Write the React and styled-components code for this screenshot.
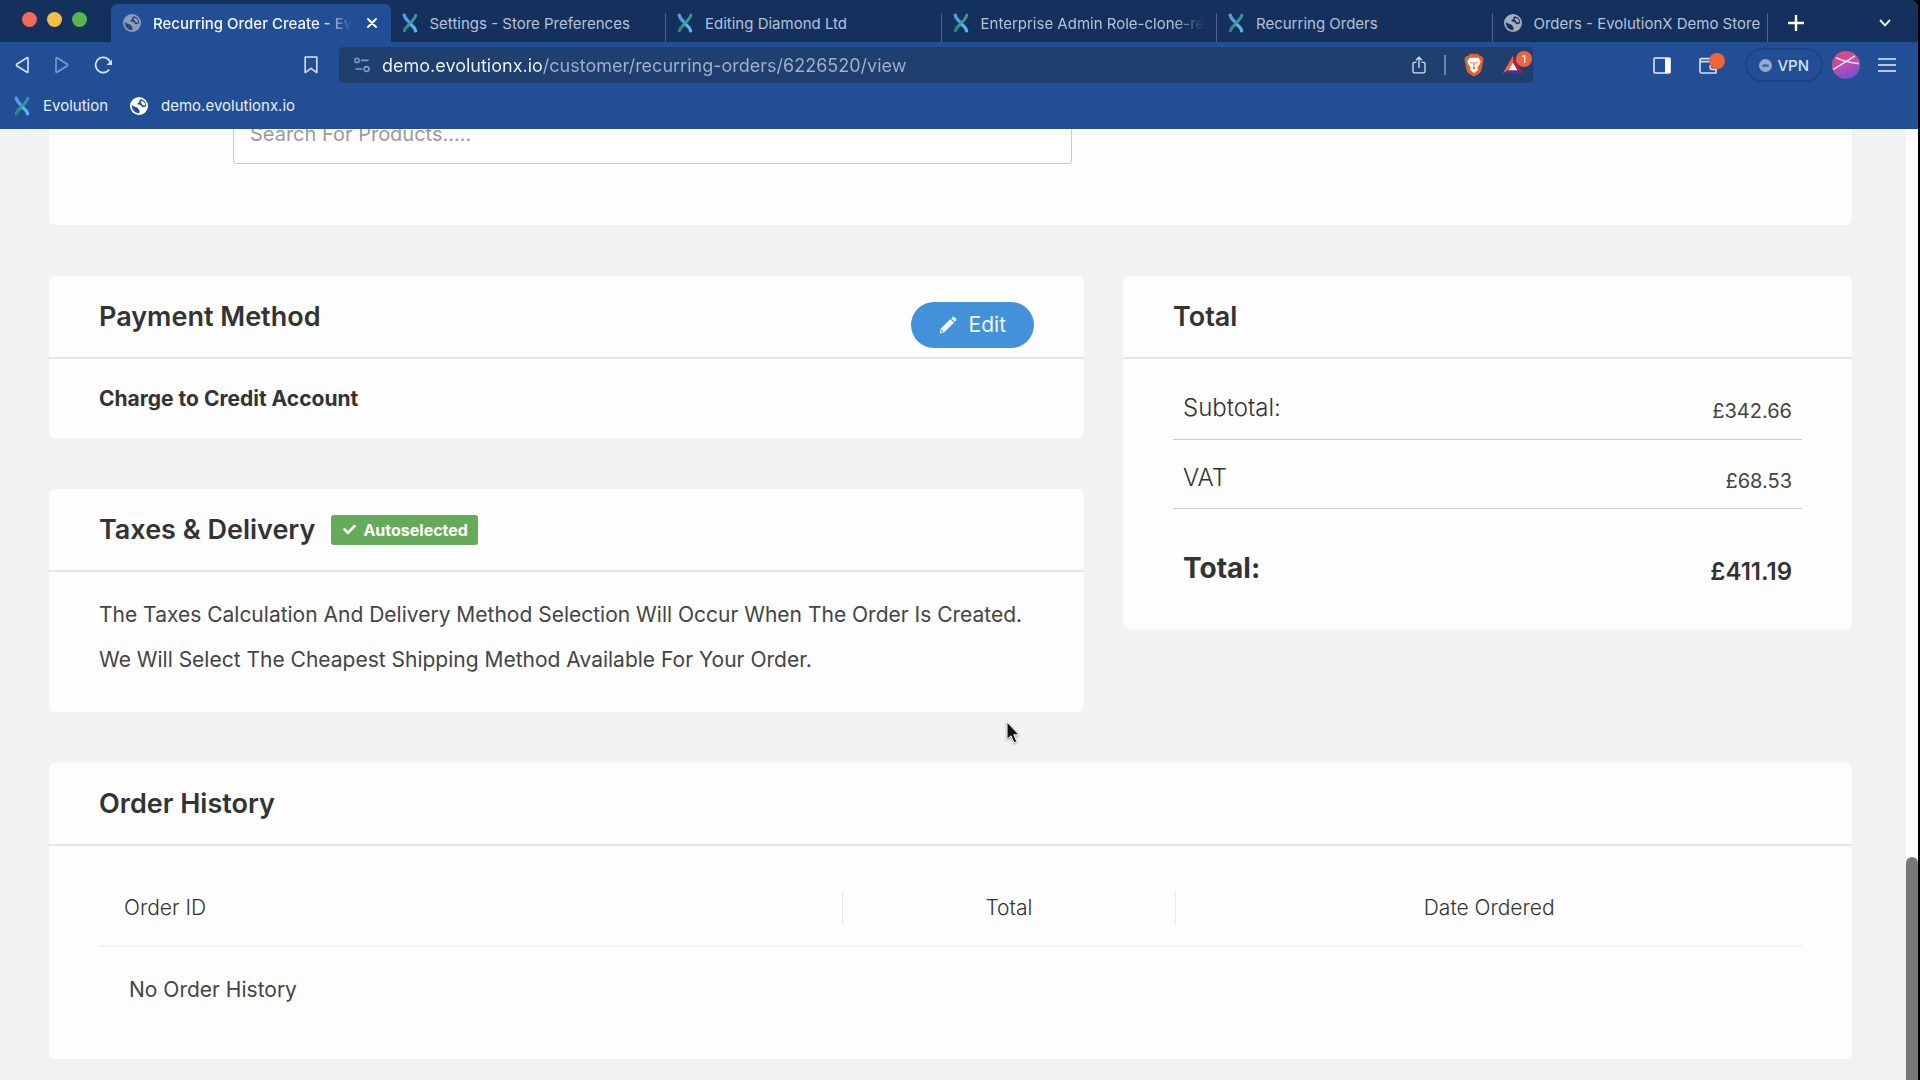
import { useState } from 'react';
import styled, { createGlobalStyle } from 'styled-components';
import { FaCheck } from 'react-icons/fa';

const tabs = [
    { title: "Recurring Order Create - Ev", icon: "globe", fade: true },
    { title: "Settings - Store Preferences", icon: "logo" },
    { title: "Editing Diamond Ltd", icon: "logo" },
    { title: "Enterprise Admin Role-clone-re", icon: "logo", fade: true },
    { title: "Recurring Orders", icon: "logo" },
    { title: "Orders - EvolutionX Demo Store", icon: "globe" },
];

const LogoIcon = () => (
    <svg width="16" height="20" viewBox="0 0 16 20" fill="none" strokeLinecap="round" aria-hidden="true">
        <path d="M2.2 2.2C3 6 6 7.6 7 9.2" stroke="#4f9fe6" strokeWidth="3.4" />
        <path d="M13.8 2.2C13 6 10.2 7.4 9 9.4C7.6 12 3.4 13.6 2.4 17.6" stroke="#3f948f" strokeWidth="3" />
        <path d="M5 13.6C3.6 15 2.8 16.2 2.4 17.6" stroke="#2b6474" strokeWidth="1" />
        <path d="M9.4 12C11.6 13.6 13 15.4 13.6 17.8" stroke="#55b6ee" strokeWidth="3.4" />
    </svg>
);

const GlobeIcon = ({ color, land }) => (
    <svg width="18" height="18" viewBox="0 0 18 18" aria-hidden="true">
        <circle cx="9" cy="9" r="9" fill={color} />
        <path
            d="M11 2.2C9.4 2.6 9 3.6 9.6 4.6C9.9 5.6 7.6 5.4 7.4 6.8C7.3 8 9.4 7.6 10.6 8.2C12 8.9 11.6 10 13 10.2C14.4 10.3 15.4 9.4 16.2 9.3C16.3 6 14.4 3 11 2.2Z"
            fill={land}
        />
        <path d="M1.8 8C3.2 9.4 5 9.6 7 10.4C8.6 11 8.2 12.2 9.2 12.9C10.2 13.6 9 15 9.4 16.2C5 16.4 1.6 12.8 1.8 8Z" fill={land} />
        <path d="M11.6 3.8C14 4.6 15.2 6.4 15.2 8.2C14 8.8 12.8 8.6 12.2 7.4C11.8 6.4 10.8 6.4 10.6 5.6Z" fill={color} />
    </svg>
);

const BackIcon = ({ flip }) => (
    <svg width="16" height="18" viewBox="0 0 16 18" fill="none" stroke="currentColor" strokeWidth="1.6" strokeLinejoin="round" aria-hidden="true">
        <path d={flip ? "M2 3V15.4Q2 17 3.4 16L13 10Q14.3 9 13 8L3.4 2Q2 1 2 3Z" : "M14 3V15.4Q14 17 12.6 16L3 10Q1.7 9 3 8L12.6 2Q14 1 14 3Z"} />
    </svg>
);

const ReloadIcon = () => (
    <svg width="20" height="18" viewBox="0 0 20 18" fill="none" aria-hidden="true">
        <path d="M15.2 13.6A7.6 7.6 0 1 1 16.2 6" stroke="currentColor" strokeWidth="1.8" />
        <path d="M18 3.6V9H12.6Z" fill="currentColor" />
    </svg>
);

const BookmarkIcon = () => (
    <svg width="14" height="18" viewBox="0 0 14 18" fill="none" stroke="currentColor" strokeWidth="1.6" aria-hidden="true">
        <path d="M1.2 1H12.8V16.6L7 12.4L1.2 16.6Z" strokeLinejoin="round" />
    </svg>
);

const TuneIcon = () => (
    <svg width="16" height="16" viewBox="0 0 16 16" fill="none" stroke="currentColor" strokeWidth="1.6" strokeLinecap="round" aria-hidden="true">
        <circle cx="3" cy="3.4" r="2.1" />
        <path d="M7.6 3.4H14M2 12H8" />
        <circle cx="12.6" cy="12" r="2.4" />
    </svg>
);

const ShareIcon = () => (
    <svg width="14" height="18" viewBox="0 0 14 18" fill="none" stroke="currentColor" strokeWidth="1.3" aria-hidden="true">
        <path d="M4.4 6.4H2.2Q1 6.4 1 7.6V15.4Q1 16.8 2.4 16.8H11.6Q13 16.8 13 15.4V7.6Q13 6.4 11.8 6.4H9.6" />
        <path d="M7 12V1.6M4 4.2L7 1.2L10 4.2" />
    </svg>
);

const BraveIcon = () => (
    <svg width="20" height="24" viewBox="0 0 20 24" aria-hidden="true">
        <path d="M6 .8H14L16 3L18 3.2L19.6 6.4L19 9L17.4 17.2Q16.8 19.4 14.8 20.8L10 23.6L5.2 20.8Q3.2 19.4 2.6 17.2L1 9L.4 6.4L2 3.2L4 3Z" fill="#e8602c" />
        <path d="M6 4.6L8 5L10 4.4L12 5L14 4.6L16.6 8L15.8 11L13.4 14.8L14 17L10 20L6 17L6.6 14.8L4.2 11L3.4 8Z" fill="#fff" />
        <path d="M5.8 8.6L8.6 9.4L8.4 11ZM14.2 8.6L11.4 9.4L11.6 11ZM8.4 15L10 13.6L11.6 15L10 16.2ZM9.5 9H10.5V13.6H9.5Z" fill="#e8602c" />
    </svg>
);

const RewardsIcon = () => (
    <svg width="22" height="20" viewBox="0 0 24 20" aria-hidden="true">
        <path d="M12 0L12 8L7.4 15.4L1 19Z" fill="#f0643a" />
        <path d="M12 0L23 19L16.6 15.4L12 8Z" fill="#a8244e" />
        <path d="M1 19L7.4 15.4H16.6L23 19Z" fill="#5d2c91" />
        <path d="M12 7.6L16.8 15.6H7.2Z" fill="#fff" />
    </svg>
);

const SidebarIcon = () => (
    <svg width="18" height="17" viewBox="0 0 18 17" aria-hidden="true">
        <rect x="1" y="1" width="16" height="15" rx="1" fill="none" stroke="#e6eefb" strokeWidth="1.5" />
        <rect x="12" y="1" width="5.4" height="15" fill="#fff" />
    </svg>
);

const WalletIcon = () => (
    <svg width="18" height="17" viewBox="0 0 18 17" fill="none" stroke="#d4e2f8" strokeWidth="1.6" aria-hidden="true">
        <path d="M17 5V1.6H2.4Q1 1.6 1 3V14.4Q1 16 2.4 16H17V12.6M1 4.6H17" />
        <path d="M18 7.6H13.4Q11 7.8 11 10Q11 12.4 13.4 12.4H18" />
    </svg>
);

const AvatarIcon = () => (
    <svg width="28" height="28" viewBox="0 0 28 28" aria-hidden="true">
        <defs>
            <linearGradient id="avatar" x1="0.3" y1="0" x2="0.7" y2="1">
                <stop offset="0" stopColor="#dc4a7c" />
                <stop offset="0.5" stopColor="#b94fb0" />
                <stop offset="1" stopColor="#6f4fd6" />
            </linearGradient>
        </defs>
        <circle cx="14" cy="14" r="14" fill="url(#avatar)" />
        <path d="M1 18.6L23 5M4 6.8Q14 11.4 27 12.6" fill="none" stroke="#f2d3ec" strokeWidth="1.6" />
    </svg>
);

const PencilIcon = () => (
    <svg width="18" height="18" viewBox="0 0 18 18" fill="#eef6ff" aria-hidden="true">
        <path d="M11.4 3L15 6.8L5.4 16.2L.6 17.4L1.8 12.4Z" />
        <path d="M12.2 2.2L13.6 .9Q14.4 .2 15.2 1L17 2.8Q17.8 3.6 17 4.4L15.8 6Z" />
        <path d="M2.6 13.4L4.6 15.4L2.2 16Z" fill="#4391d8" />
    </svg>
);

const CursorIcon = () => (
    <svg width="14" height="24" viewBox="0 0 14 24" aria-hidden="true">
        <path d="M1 1V18.4L5 14.8L8 21.8L10.8 20.6L7.8 13.8H13Z" fill="#111" stroke="#fff" strokeWidth="1" />
    </svg>
);

const App = () => {
    const [address, setAddress] = useState("demo.evolutionx.io/customer/recurring-orders/6226520/view");
    const [search, setSearch] = useState("");

    return (
        <>
            <GlobalStyle />
            <Browser>
                <TabStrip>
                    <Lights>
                        <Light color="#ee6a5b" />
                        <Light color="#f3be4e" />
                        <Light color="#58b652" />
                    </Lights>
                    <Tabs>
                        {tabs.map((tab, i) => (
                            <Tab key={tab.title} $active={i === 0}>
                                <TabButton type="button" $active={i === 0}>
                                    {tab.icon === "logo"
                                        ? <LogoIcon />
                                        : <GlobeIcon color={i === 0 ? "#8f9cb3" : "#a3adbd"} land={i === 0 ? "#234a88" : "#17325e"} />}
                                    <TabTitle $fade={tab.fade}>{tab.title}</TabTitle>
                                </TabButton>
                                {i === 0 && (
                                    <TabClose type="button" aria-label="Close tab">
                                        <svg width="10" height="10" viewBox="0 0 10 10" stroke="#fff" strokeWidth="1.8" strokeLinecap="round">
                                            <path d="M1 1L9 9M9 1L1 9" />
                                        </svg>
                                    </TabClose>
                                )}
                            </Tab>
                        ))}
                    </Tabs>
                    <StripActions>
                        <IconButton type="button" aria-label="New tab">
                            <svg width="16" height="16" viewBox="0 0 16 16" stroke="#fff" strokeWidth="2.4">
                                <path d="M8 0V16M0 8H16" />
                            </svg>
                        </IconButton>
                        <IconButton type="button" aria-label="Search tabs">
                            <svg width="12" height="8" viewBox="0 0 12 8" fill="none" stroke="#e6eefb" strokeWidth="2">
                                <path d="M1 1L6 6.4L11 1" />
                            </svg>
                        </IconButton>
                    </StripActions>
                </TabStrip>

                <Toolbar>
                    <NavButtons>
                        <IconButton type="button" aria-label="Back"><BackIcon /></IconButton>
                        <IconButton type="button" aria-label="Forward" $dim><BackIcon flip /></IconButton>
                        <IconButton type="button" aria-label="Reload"><ReloadIcon /></IconButton>
                    </NavButtons>
                    <IconButton type="button" aria-label="Bookmark this page"><BookmarkIcon /></IconButton>
                    <AddressBar>
                        <IconButton type="button" aria-label="Site settings" $dim><TuneIcon /></IconButton>
                        <AddressInput
                            type="text"
                            aria-label="Address"
                            value={address}
                            onChange={(e) => setAddress(e.target.value)}
                        />
                        <AddressActions>
                            <IconButton type="button" aria-label="Share"><ShareIcon /></IconButton>
                            <Divider />
                            <IconButton type="button" aria-label="Shields"><BraveIcon /></IconButton>
                            <IconButton type="button" aria-label="Rewards">
                                <RewardsIcon />
                                <Count>1</Count>
                            </IconButton>
                        </AddressActions>
                    </AddressBar>
                    <BrowserActions>
                        <Tools>
                            <IconButton type="button" aria-label="Sidebar"><SidebarIcon /></IconButton>
                            <IconButton type="button" aria-label="Wallet">
                                <WalletIcon />
                                <Count />
                            </IconButton>
                            <Account>
                                <VpnButton type="button"><VpnDot />VPN</VpnButton>
                                <IconButton type="button" aria-label="Profile"><AvatarIcon /></IconButton>
                            </Account>
                        </Tools>
                        <IconButton type="button" aria-label="Menu">
                            <svg width="18" height="14" viewBox="0 0 18 14" stroke="#b4c6e6" strokeWidth="2">
                                <path d="M0 1H18M0 7H18M0 13H18" />
                            </svg>
                        </IconButton>
                    </BrowserActions>
                </Toolbar>

                <Bookmarks>
                    <Bookmark href="#evolution"><LogoIcon />Evolution</Bookmark>
                    <Bookmark href="#demo"><GlobeIcon color="#fff" land="#214e94" />demo.evolutionx.io</Bookmark>
                </Bookmarks>

                <Viewport>
                    <Page>
                        <Card>
                            <SearchRow>
                                <SearchInput
                                    type="text"
                                    aria-label="Search For Products"
                                    placeholder="Search For Products....."
                                    value={search}
                                    onChange={(e) => setSearch(e.target.value)}
                                />
                            </SearchRow>
                        </Card>

                        <Columns>
                            <Stack>
                                <Card>
                                    <CardHeader>
                                        <Heading>Payment Method</Heading>
                                        <EditButton type="button"><PencilIcon />Edit</EditButton>
                                    </CardHeader>
                                    <PaymentName>Charge to Credit Account</PaymentName>
                                </Card>
                                <Card>
                                    <CardHeader>
                                        <Heading>Taxes &amp; Delivery</Heading>
                                        <Badge><FaCheck size={13} />Autoselected</Badge>
                                    </CardHeader>
                                    <Notes>
                                        <p>The Taxes Calculation And Delivery Method Selection Will Occur When The Order Is Created.</p>
                                        <p>We Will Select The Cheapest Shipping Method Available For Your Order.</p>
                                    </Notes>
                                </Card>
                            </Stack>
                            <Card>
                                <CardHeader>
                                    <Heading>Total</Heading>
                                </CardHeader>
                                <TotalsBody>
                                    <Totals>
                                        <tbody>
                                            <TotalRow><th scope="row">Subtotal:</th><td>£342.66</td></TotalRow>
                                            <TotalRow><th scope="row">VAT</th><td>£68.53</td></TotalRow>
                                            <GrandRow><th scope="row">Total:</th><td>£411.19</td></GrandRow>
                                        </tbody>
                                    </Totals>
                                </TotalsBody>
                            </Card>
                        </Columns>

                        <Card>
                            <CardHeader>
                                <Heading>Order History</Heading>
                            </CardHeader>
                            <HistoryBody>
                                <History>
                                    <colgroup>
                                        <col width="43.6%" />
                                        <col width="19.6%" />
                                        <col />
                                    </colgroup>
                                    <thead>
                                        <tr>
                                            <HistoryHead $first><span>Order ID</span></HistoryHead>
                                            <HistoryHead><span>Total</span></HistoryHead>
                                            <HistoryHead><span>Date Ordered</span></HistoryHead>
                                        </tr>
                                    </thead>
                                    <tbody>
                                        <tr>
                                            <HistoryCell colSpan={3}>No Order History</HistoryCell>
                                        </tr>
                                    </tbody>
                                </History>
                            </HistoryBody>
                        </Card>
                    </Page>
                    <ScrollTrack>
                        <ScrollThumb />
                    </ScrollTrack>
                </Viewport>
            </Browser>
            <Pointer><CursorIcon /></Pointer>
        </>
    );
};

const GlobalStyle = createGlobalStyle`
  * { box-sizing: border-box; }
  body {
    margin: 0;
    background: #000;
    font-family: Inter, "Open Sans", sans-serif;
  }
  button, input { font-family: inherit; }
  svg { display: block; flex: none; }
`;

const Browser = styled.div`
  display: flex;
  flex-direction: column;
  height: 100vh;
  margin-right: 2px;
  overflow: hidden;
  border-top-right-radius: 8px;
  background: #214e94;
`;

const TabStrip = styled.div`
  display: flex;
  height: 42px;
  flex: none;
  padding-top: 4px;
  background: #14305c;
`;

const Lights = styled.div`
  display: flex;
  gap: 10px;
  width: 111px;
  padding: 8px 0 0 22px;
`;

const Light = styled.span`
  width: 15px;
  height: 15px;
  border-radius: 50%;
  background: ${(props) => props.color};
`;

/* the active tab is slightly wider than the rest */
const Tabs = styled.div`
  display: grid;
  grid-template-columns: minmax(0, 279fr) repeat(5, minmax(0, 275fr));
  flex: 1;
  min-width: 0;
`;

const Tab = styled.div`
  display: flex;
  align-items: center;
  min-width: 0;
  padding: ${(props) => (props.$active ? "0 10px 0 12px" : "0 1px 0 11px")};
  border-radius: ${(props) => (props.$active ? "6px 6px 0 0" : "0")};
  background: ${(props) => (props.$active
        ? "#214e94"
        : "linear-gradient(#4a638c, #4a638c) right bottom / 1px 29px no-repeat")};
`;

const TabButton = styled.button`
  display: flex;
  align-items: center;
  gap: 12px;
  flex: 1;
  min-width: 0;
  height: 30px;
  padding: 0;
  border: none;
  background: none;
  font-size: 15px;
  font-weight: ${(props) => (props.$active ? "500" : "400")};
  color: ${(props) => (props.$active ? "#f0f5fd" : "#b4c2d9")};
`;

const TabTitle = styled.span`
  white-space: nowrap;
  text-align: left;
  mask-image: ${(props) => (props.$fade ? "linear-gradient(90deg, #000 calc(100% - 30px), transparent)" : "none")};
`;

const TabClose = styled.button`
  padding: 4px;
  border: none;
  background: none;
`;

const StripActions = styled.div`
  display: flex;
  align-items: center;
  justify-content: space-between;
  width: 150px;
  padding: 0 27px 0 20px;
`;

const IconButton = styled.button`
  position: relative;
  display: flex;
  padding: 0;
  border: none;
  background: none;
  color: ${(props) => (props.$dim ? "#7f9ac8" : "#d4e2f8")};
`;

const Toolbar = styled.div`
  display: flex;
  align-items: center;
  flex: none;
  height: 46px;
  padding: 0 22px 0 14px;
`;

const NavButtons = styled.div`
  display: flex;
  align-items: center;
  gap: 24px;
  flex: none;
  width: 290px;
`;

const AddressBar = styled.div`
  display: flex;
  align-items: center;
  gap: 12px;
  flex: 1;
  min-width: 0;
  height: 36px;
  margin-left: 21px;
  padding: 0 9px 0 15px;
  border-radius: 4px;
  background: #1f406f;
`;

/* host part of the address is brighter than the path */
const AddressInput = styled.input`
  flex: 1;
  min-width: 0;
  height: 36px;
  padding: 0;
  border: none;
  outline: none;
  font-size: 18px;
  color: transparent;
  background: linear-gradient(90deg, #f2f6fd 160px, #9fb2d0 160px);
  background-clip: text;
`;

const AddressActions = styled.div`
  display: flex;
  align-items: center;
  gap: 18px;
`;

const Divider = styled.span`
  width: 2px;
  height: 20px;
  background: #6e87ae;
`;

const Count = styled.span`
  position: absolute;
  top: -4px;
  right: -8px;
  width: 16px;
  height: 16px;
  border-radius: 50%;
  background: #ef6537;
  color: #fff;
  font-size: 11px;
  line-height: 16px;
  text-align: center;
`;

const BrowserActions = styled.div`
  display: flex;
  align-items: center;
  justify-content: flex-end;
  gap: 18px;
  flex: none;
  width: 363px;
`;

const Tools = styled.div`
  display: flex;
  align-items: center;
  gap: 28px;
`;

const Account = styled.div`
  display: flex;
  align-items: center;
  gap: 9px;
`;

const VpnButton = styled.button`
  display: flex;
  align-items: center;
  gap: 5px;
  height: 34px;
  padding: 0 12px;
  border: 2px solid #1e4480;
  border-radius: 17px;
  background: none;
  color: #d4e2f8;
  font-size: 15px;
  font-weight: 500;
`;

const VpnDot = styled.span`
  width: 13px;
  height: 13px;
  border: solid #93a9d0;
  border-width: 5px 3px;
  border-radius: 50%;
  background: #4b6aa3;
`;

const Bookmarks = styled.div`
  display: flex;
  align-items: center;
  gap: 22px;
  flex: none;
  height: 41px;
  padding: 0 14px 6px;
`;

const Bookmark = styled.a`
  display: flex;
  align-items: center;
  gap: 13px;
  color: #e6eefb;
  font-size: 15px;
  text-decoration: none;
`;

const Viewport = styled.main`
  display: flex;
  align-items: flex-end;
  flex: 1;
  min-height: 0;
  overflow: hidden;
  background: #f2f2f2;
`;

const Page = styled.div`
  display: flex;
  flex-direction: column;
  gap: 51px;
  flex: 1;
  min-width: 0;
  padding: 0 54px 21px 49px;
  color: #333;
`;

const Card = styled.section`
  border-radius: 6px;
  background: #fdfdfd;
`;

const SearchRow = styled.div`
  display: grid;
  grid-template-columns: 839fr 780fr;
  padding: 48px 0 61px 184px;
`;

const SearchInput = styled.input`
  height: 60px;
  padding: 0 16px;
  border: 1px solid #ccc;
  border-radius: 3px;
  background: #fff;
  font-size: 20px;
  color: #333;

  &::placeholder { color: #999; }
`;

const Columns = styled.div`
  display: grid;
  grid-template-columns: minmax(0, 1035fr) minmax(0, 729fr);
  align-items: start;
  gap: 39px;
`;

const Stack = styled.div`
  display: flex;
  flex-direction: column;
  gap: 51px;
`;

const CardHeader = styled.header`
  display: flex;
  align-items: center;
  height: 83px;
  padding: 0 50px;
  border-bottom: 2px solid #e6e6e6;
`;

const Heading = styled.h2`
  margin: 0;
  font-size: 27px;
  font-weight: 600;
  line-height: 40px;
`;

const EditButton = styled.button`
  display: flex;
  align-items: center;
  gap: 12px;
  height: 46px;
  margin: 16px 0 0 auto;
  padding: 0 28px;
  border: none;
  border-radius: 23px;
  background: #4391d8;
  color: #eef6ff;
  font-size: 21px;
`;

const Badge = styled.span`
  display: flex;
  align-items: center;
  gap: 7px;
  height: 30px;
  margin-left: 16px;
  padding: 0 10px 0 12px;
  border-radius: 3px;
  background: #66ab5c;
  color: #fff;
  font-size: 16px;
  font-weight: 700;
`;

const PaymentName = styled.p`
  margin: 0;
  padding: 17px 50px;
  font-size: 21px;
  font-weight: 700;
  line-height: 45px;
`;

const Notes = styled.div`
  padding: 20px 50px 30px;
  font-size: 21px;
  line-height: 45px;
  color: #444;

  p { margin: 0; }
`;

const TotalsBody = styled.div`
  padding: 11px 50px 31px;
`;

const Totals = styled.table`
  width: 100%;
  border-collapse: collapse;

  th, td { padding: 0 10px; vertical-align: top; }
  th { text-align: left; }
  td { text-align: right; }
`;

const TotalRow = styled.tr`
  height: 69px;
  border-bottom: 1px solid #ccc;

  th { padding-top: 18px; font-size: 24px; font-weight: 300; line-height: 40px; }
  td { padding-top: 20px; font-size: 20px; line-height: 42px; color: #444; }
`;

const GrandRow = styled.tr`
  height: 90px;

  th { padding-top: 39px; font-size: 28px; font-weight: 700; line-height: 40px; }
  td { padding-top: 43px; font-size: 24px; font-weight: 600; line-height: 40px; }
`;

const HistoryBody = styled.div`
  padding: 25px 50px 29px;
`;

const History = styled.table`
  width: 100%;
  table-layout: fixed;
  border-collapse: collapse;
`;

const HistoryHead = styled.th`
  padding: 20px 0;
  border-bottom: 2px solid #f3f3f3;
  font-size: 21px;
  font-weight: 300;
  line-height: 34px;
  text-align: ${(props) => (props.$first ? "left" : "center")};

  span {
    display: block;
    padding-left: ${(props) => (props.$first ? "25px" : "0")};
    border-left: ${(props) => (props.$first ? "none" : "1px solid #e8e8e8")};
  }
`;

const HistoryCell = styled.td`
  padding: 23px 30px 20px;
  font-size: 21px;
  line-height: 40px;
  color: #444;
`;

const ScrollTrack = styled.div`
  display: flex;
  flex-direction: column;
  justify-content: flex-end;
  align-self: stretch;
  width: 12px;
  background: #fdfdfd;
`;

const ScrollThumb = styled.div`
  height: 23.5%;
  border-radius: 6px 6px 0 0;
  background: #777;
`;

const Pointer = styled.div`
  position: absolute;
  top: 721px;
  left: 1006px;
  filter: drop-shadow(0 1px 1px rgba(0, 0, 0, 0.4));
`;

export default App;
